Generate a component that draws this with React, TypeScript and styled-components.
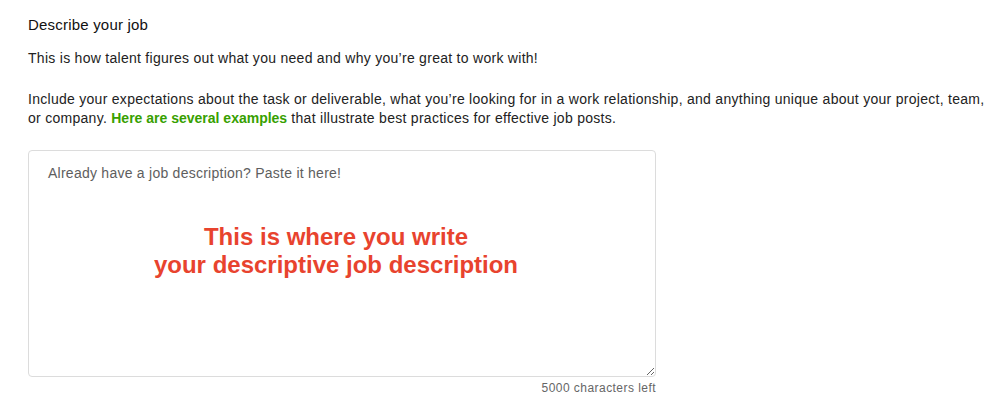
import styled, { createGlobalStyle } from "styled-components";

const GlobalStyle = createGlobalStyle`
  html, body {
    margin: 0;
    padding: 0;
    background: #fff;
  }
  body {
    font-family: "Liberation Sans", Arial, sans-serif;
    color: #222;
  }
`;

export default function App() {
  return (
    <>
      <GlobalStyle />
      <Page>
        <Title>Describe your job</Title>
        <Text>This is how talent figures out what you need and why you’re great to work with!</Text>
        <Text>
          Include your expectations about the task or deliverable, what you’re looking for in a work relationship, and
          anything unique about your project, team, or company. <GreenLink href="#">Here are several examples</GreenLink>{" "}
          that illustrate best practices for effective job posts.
        </Text>

        <Field>
          <BoxWrap>
            <TextArea placeholder="Already have a job description? Paste it here!" />
            <Annotation>
              This is where you write
              <br />
              your descriptive job description
            </Annotation>
          </BoxWrap>
          <Counter>5000 characters left</Counter>
        </Field>
      </Page>
    </>
  );
}

const Page = styled.div`
  padding: 14px 18px 0 28px;
  width: 960px;
`;

const Title = styled.h2`
  margin: 0 0 13px;
  font-size: 15px;
  line-height: 22px;
  font-weight: 500;
  letter-spacing: 0.2px;
  color: #111;
`;

const Text = styled.p`
  margin: 0 0 22px;
  font-size: 14px;
  line-height: 19px;
  letter-spacing: 0.28px;
  color: #222;
`;

const GreenLink = styled.a`
  color: #37a000;
  font-weight: 700;
  letter-spacing: 0;
  text-decoration: none;
`;

const Field = styled.div`
  width: 628px;
`;

const BoxWrap = styled.div`
  position: relative;
`;

const TextArea = styled.textarea`
  display: block;
  box-sizing: border-box;
  width: 100%;
  height: 227px;
  padding: 12px 19px;
  border: 1px solid #dcdcdc;
  border-radius: 4px;
  font-family: "Liberation Sans", Arial, sans-serif;
  font-size: 14px;
  line-height: 20px;
  letter-spacing: 0.25px;
  color: #222;
  resize: vertical;
  outline: none;

  &::placeholder {
    color: #5e5e5e;
  }
`;

const Annotation = styled.div`
  position: absolute;
  left: 0;
  right: 12px;
  top: 73px;
  text-align: center;
  font-size: 24px;
  line-height: 28px;
  font-weight: 700;
  color: #e8432e;
  pointer-events: none;
`;

const Counter = styled.div`
  margin-top: 3px;
  text-align: right;
  font-size: 12px;
  line-height: 16px;
  letter-spacing: 0.45px;
  color: #666;
`;
